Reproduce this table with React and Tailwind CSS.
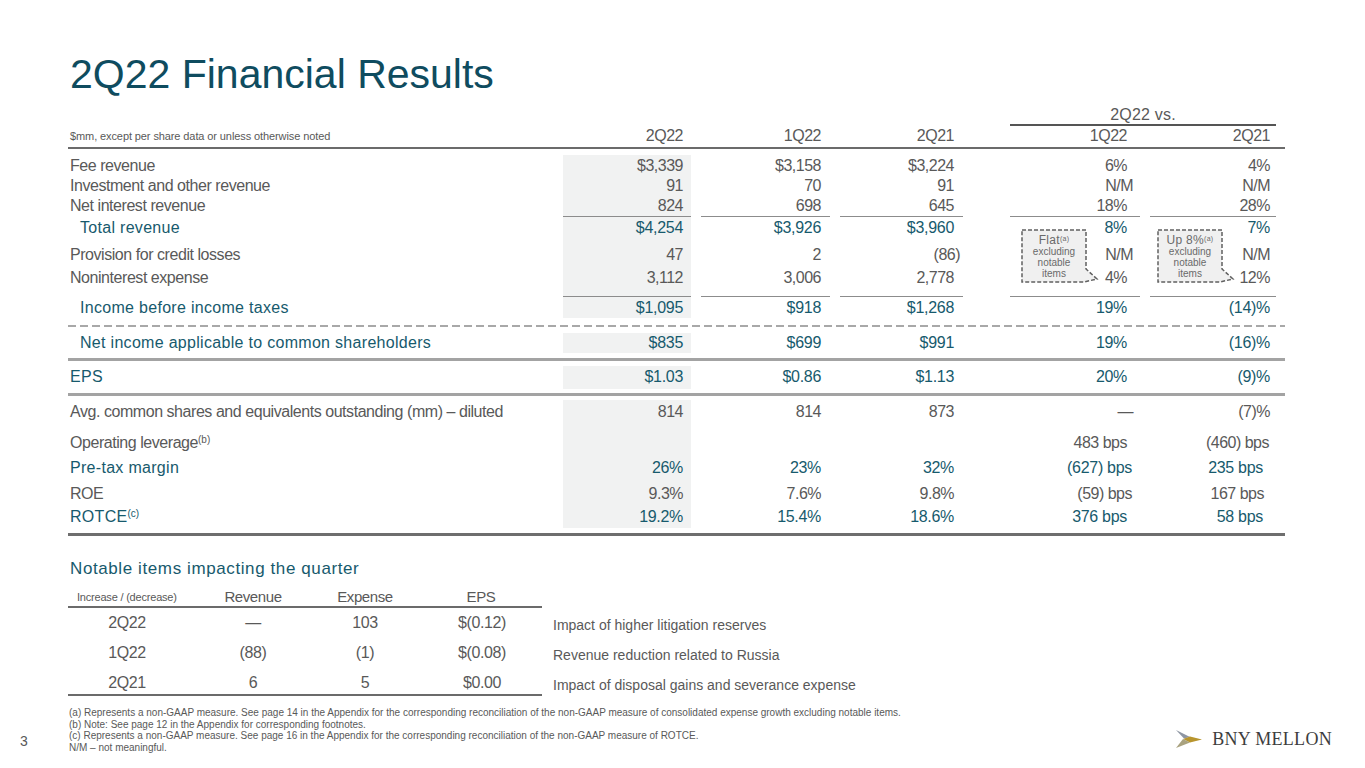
import { Fragment } from 'react';

const GRAY = 'text-[#595959]';
const TEAL = 'text-[#175a6d]';
const W = ['w-[128px]', 'w-[129px]', 'w-[123px]', 'w-[130px]', 'w-[126px]'];
const PR = ['pr-[8px]', 'pr-[9px]', 'pr-[9px]', 'pr-[13px]', 'pr-[6px]'];
const SP = ['w-[10px]', 'w-[10px]', 'w-[47px]', 'w-[10px]'];

const Row = ({ label, sup, vals, teal, indent, line, pt = '', h, adj = {} }) => {
  const color = teal ? TEAL : GRAY;
  const border = line ? 'border-b border-[#8c8c8c]' : '';
  return (
    <div className={`flex ${h} text-[16px] leading-[20px] ${color}`}>
      <div className={`w-[495px] ${pt} ${indent ? 'pl-[12px]' : 'pl-[2px]'} ${teal ? 'tracking-[0.3px]' : 'tracking-[-0.45px]'}`}>
        {label}
        {sup && <sup className="text-[10px] tracking-normal">{sup}</sup>}
      </div>
      {vals.map((v, i) => (
        <Fragment key={i}>
          <div
            className={`${W[i]} ${pt} ${adj[i] || PR[i]} text-right ${teal ? 'tracking-[-0.3px]' : 'tracking-[-0.5px]'} ${i === 0 ? 'bg-[#f1f2f2]' : ''} ${border}`}
          >
            {v}
          </div>
          {i < 4 && <div className={SP[i]} />}
        </Fragment>
      ))}
      <div className="w-[9px]" />
    </div>
  );
};

const Callout = ({ pos, head }) => (
  <div className={`absolute ${pos} w-[78px] h-[54px]`}>
    <svg className="absolute inset-0" width="78" height="54" viewBox="0 0 78 54">
      <path d="M1 1H65V40L76 50L63 53H1Z" fill="#f0f0f0" stroke="#606060" strokeWidth="1.5" strokeDasharray="4 2" />
    </svg>
    <div className="relative w-[66px] pt-[5px] text-center text-[10px] leading-[11px] text-[#6a6a6a]">
      <div className="text-[12px] leading-[12px] tracking-[0.3px]">
        {head}
        <sup className="text-[7px]">(a)</sup>
      </div>
      <div>excluding</div>
      <div>notable</div>
      <div>items</div>
    </div>
  </div>
);

const notable = [
  ['2Q22', '—', '103', '$(0.12)', 'Impact of higher litigation reserves', 'h-[30px]'],
  ['1Q22', '(88)', '(1)', '$(0.08)', 'Revenue reduction related to Russia', 'h-[30px]'],
  ['2Q21', '6', '5', '$0.00', 'Impact of disposal gains and severance expense', 'h-[28px]'],
];

const App = () => {
  return (
    <div className="relative w-[1365px] h-[768px] overflow-hidden bg-white font-['Liberation_Sans',Arial,sans-serif]">
      <h1 className="pl-[70px] pt-[50px] text-[41px] leading-[48px] text-[#0f4c5f]">2Q22 Financial Results</h1>

      <div className="ml-[68px] w-[1217px]">
        <div className="mt-[8px] flex h-[20px]">
          <div className="w-[942px]" />
          <div className={`w-[266px] border-b-2 border-[#555] text-center text-[16px] leading-[18px] tracking-[0.2px] ${GRAY}`}>2Q22 vs.</div>
        </div>
        <div className={`flex h-[23px] border-b-2 border-[#6b6b6b] text-[16px] leading-[20px] tracking-[-0.5px] ${GRAY}`}>
          <div className="w-[495px] pl-[2px] text-[11px] tracking-[-0.1px]">$mm, except per share data or unless otherwise noted</div>
          {['2Q22', '1Q22', '2Q21', '1Q22', '2Q21'].map((v, i) => (
            <Fragment key={i}>
              <div className={`${W[i]} ${PR[i]} text-right`}>{v}</div>
              {i < 4 && <div className={SP[i]} />}
            </Fragment>
          ))}
        </div>

        <div className="mt-[6px]">
          <Row label="Fee revenue" vals={['$3,339', '$3,158', '$3,224', '6%', '4%']} pt="pt-[1px]" h="h-[21px]" />
          <Row label="Investment and other revenue" vals={['91', '70', '91', 'N/M', 'N/M']} h="h-[20px]" adj={{ 3: 'pr-[7px]' }} />
          <Row label="Net interest revenue" vals={['824', '698', '645', '18%', '28%']} h="h-[21px]" line />
          <Row label="Total revenue" teal indent vals={['$4,254', '$3,926', '$3,960', '8%', '7%']} pt="pt-[1px]" h="h-[23px]" />
          <Row label="Provision for credit losses" vals={['47', '2', '(86)', 'N/M', 'N/M']} pt="pt-[5px]" h="h-[27px]" adj={{ 2: 'pr-[3px]', 3: 'pr-[7px]' }} />
          <Row label="Noninterest expense" vals={['3,112', '3,006', '2,778', '4%', '12%']} pt="pt-[1px]" h="h-[30px]" line />
          <Row label="Income before income taxes" teal indent vals={['$1,095', '$918', '$1,268', '19%', '(14)%']} pt="pt-[1px]" h="h-[21px]" />
        </div>

        <div className="mt-[7px] h-[2px] bg-[image:repeating-linear-gradient(90deg,#a8a8a8_0px,#a8a8a8_8px,transparent_8px,transparent_12px)]" />

        <div className="mt-[6px]">
          <Row label="Net income applicable to common shareholders" teal indent vals={['$835', '$699', '$991', '19%', '(16)%']} h="h-[20px]" />
        </div>
        <div className="mt-[5px] h-[3px] bg-[#a3a3a3]" />

        <div className="mt-[5px]">
          <Row label="EPS" teal vals={['$1.03', '$0.86', '$1.13', '20%', '(9)%']} pt="pt-[1px]" h="h-[23px]" />
        </div>
        <div className="mt-[4px] h-[3px] bg-[#a3a3a3]" />

        <div className="mt-[4px]">
          <Row label="Avg. common shares and equivalents outstanding (mm) – diluted" vals={['814', '814', '873', '—', '(7)%']} pt="pt-[2px]" h="h-[22px]" adj={{ 3: 'pr-[7px]' }} />
          <Row label="Operating leverage" sup="(b)" vals={['', '', '', '483 bps', '(460) bps']} pt="pt-[11px]" h="h-[31px]" adj={{ 4: 'pr-[7px]' }} />
          <Row label="Pre-tax margin" teal vals={['26%', '23%', '32%', '(627) bps', '235 bps']} pt="pt-[5px]" h="h-[25px]" adj={{ 3: 'pr-[8px]', 4: 'pr-[13px]' }} />
          <Row label="ROE" vals={['9.3%', '7.6%', '9.8%', '(59) bps', '167 bps']} pt="pt-[6px]" h="h-[26px]" adj={{ 3: 'pr-[8px]', 4: 'pr-[12px]' }} />
          <Row label="ROTCE" sup="(c)" teal vals={['19.2%', '15.4%', '18.6%', '376 bps', '58 bps']} pt="pt-[3px]" h="h-[24px]" adj={{ 4: 'pr-[13px]' }} />
        </div>
        <div className="mt-[5px] h-[3px] bg-[#6e6e6e]" />
      </div>

      <Callout pos="left-[1021px] top-[229px]" head="Flat" />
      <Callout pos="left-[1157px] top-[229px]" head="Up 8%" />

      <div className="ml-[68px] mt-[23px]">
        <div className={`pl-[2px] text-[17px] leading-[20px] tracking-[0.6px] ${TEAL}`}>Notable items impacting the quarter</div>
        <div className={`mt-[9px] flex h-[20px] w-[474px] items-start border-b-2 border-[#6b6b6b] leading-[18px] tracking-[-0.4px] ${GRAY}`}>
          <div className="w-[118px] pl-[9px] text-[11px] tracking-[-0.2px]">Increase / (decrease)</div>
          <div className="w-[134px] text-center text-[15px]">Revenue</div>
          <div className="w-[90px] text-center text-[15px]">Expense</div>
          <div className="w-[132px] pl-[10px] text-center text-[15px]">EPS</div>
        </div>
        {notable.map(([q, rev, exp, eps, desc, h], i) => (
          <div key={q} className={`flex ${h} text-[16px] leading-[20px] ${GRAY}`}>
            <div className={`flex w-[474px] tracking-[-0.4px] ${i === 2 ? 'border-b-2 border-[#6b6b6b] pt-[5px]' : 'items-center'}`}>
              <div className="w-[118px] text-center">{q}</div>
              <div className="w-[134px] text-center">{rev}</div>
              <div className="w-[90px] text-center">{exp}</div>
              <div className="w-[132px] pl-[12px] text-center">{eps}</div>
            </div>
            <div className="pl-[11px] pt-[7px] text-[14px]">{desc}</div>
          </div>
        ))}
      </div>

      <div className={`mt-[11px] flex ${GRAY}`}>
        <div className="w-[69px] pl-[20px] pt-[26px] text-[14px] leading-[16px]">3</div>
        <div className="flex-1 text-[10px] leading-[11.5px]">
          <p>(a) Represents a non-GAAP measure. See page 14 in the Appendix for the corresponding reconciliation of the non-GAAP measure of consolidated expense growth excluding notable items.</p>
          <p>(b) Note: See page 12 in the Appendix for corresponding footnotes.</p>
          <p>(c) Represents a non-GAAP measure. See page 16 in the Appendix for the corresponding reconciliation of the non-GAAP measure of ROTCE.</p>
          <p>N/M – not meaningful.</p>
        </div>
        <div className="flex items-center gap-[10px] self-start pr-[33px] pt-[23px]">
          <svg width="26" height="18" viewBox="0 0 26 18">
            <polygon points="0,0 14,7 8,8.5" fill="#8e96a3" />
            <polygon points="7,9 14,6.5 26,9.5 14,12.5" fill="#b8952e" />
            <polygon points="0,18 7,9 14,12.5" fill="#a9a27f" />
          </svg>
          <span className="font-['Liberation_Serif',serif] text-[18px] leading-[18px] tracking-[0.3px] text-[#3d3d3d]">BNY MELLON</span>
        </div>
      </div>
    </div>
  );
};

export default App;
